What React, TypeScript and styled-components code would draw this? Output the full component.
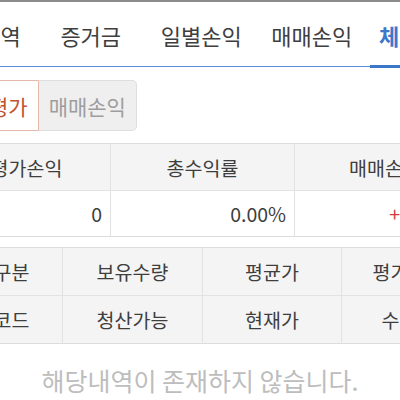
import React from 'react'
import styled, { createGlobalStyle } from 'styled-components'

const GlobalStyle = createGlobalStyle`
	html, body {
		margin: 0;
		padding: 0;
		background: #fff;
		overflow: hidden;
	}
	body {
		font-family: "Noto Sans CJK KR", "Noto Sans", sans-serif;
		color: #3e3e3e;
	}
`

const tabs = ['잔고내역', '증거금', '일별손익', '매매손익', '체결내역']
const activeTab = 4

const summaryHead = ['평가손익', '총수익률', '매매손익']

const listHead = [
	['구분', '보유수량', '평균가', '평가손익'],
	['코드', '청산가능', '현재가', '수익률'],
]

const App: React.FC = () => {
	return (
		<>
			<GlobalStyle />
			<Page>
				<TabBar>
					{tabs.map((t, i) => (
						<Tab key={t} active={i === activeTab}>
							{t}
						</Tab>
					))}
				</TabBar>

				<ToggleGroup>
					<Toggle active>평가</Toggle>
					<Toggle>매매손익</Toggle>
				</ToggleGroup>

				<SummaryTable>
					<tbody>
						<tr>
							{summaryHead.map((h) => (
								<HeadCell key={h}>{h}</HeadCell>
							))}
						</tr>
						<tr>
							<ValueCell>0</ValueCell>
							<ValueCell>0.00%</ValueCell>
							<ValueCell plus>+0.00%</ValueCell>
						</tr>
					</tbody>
				</SummaryTable>

				<ListTable>
					<tbody>
						{listHead.map((row, r) => (
							<tr key={r}>
								{row.map((h) => (
									<ListHeadCell key={h}>{h}</ListHeadCell>
								))}
							</tr>
						))}
					</tbody>
				</ListTable>

				<Empty>해당내역이 존재하지 않습니다.</Empty>
			</Page>
		</>
	)
}

const Page = styled.div`
	width: 550px;
	margin-left: -75px;
`

const TabBar = styled.div`
	display: flex;
	height: 64px;
	border-top: 2px solid #8c8c8c;
	border-bottom: 1px solid #5a8ed4;
`

const Tab = styled.div<{ active?: boolean }>`
	position: relative;
	flex: 0 0 110.5px;
	display: flex;
	align-items: center;
	justify-content: ${(props) => (props.active ? 'flex-start' : 'center')};
	padding: 2px 0 0 ${(props) => (props.active ? '12px' : '0')};
	box-sizing: border-box;
	font-size: 22px;
	white-space: nowrap;
	color: ${(props) => (props.active ? '#3a78cc' : '#3e3e3e')};
	font-weight: ${(props) => (props.active ? 700 : 400)};

	&::after {
		content: '';
		display: ${(props) => (props.active ? 'block' : 'none')};
		position: absolute;
		left: 3px;
		right: 3px;
		bottom: -2px;
		height: 3px;
		background: #3a78cc;
	}
`

const ToggleGroup = styled.div`
	display: flex;
	margin: 13px 0 0 53px;
`

const Toggle = styled.div<{ active?: boolean }>`
	height: 51px;
	padding: 0 10px;
	box-sizing: border-box;
	display: flex;
	align-items: center;
	justify-content: center;
	font-size: 21px;
	white-space: nowrap;
	background: ${(props) => (props.active ? '#fff' : '#efefef')};
	color: ${(props) => (props.active ? '#c4522e' : '#9d9d9d')};
	border: 1px solid ${(props) => (props.active ? '#e4b9aa' : '#dedede')};
	border-radius: ${(props) => (props.active ? '5px 0 0 5px' : '0 5px 5px 0')};
	${(props) => (props.active ? '' : 'border-left: none;')}
`

const SummaryTable = styled.table`
	width: 532px;
	margin: 12px 0 0 18px;
	border-collapse: collapse;
	table-layout: fixed;
	border-top: 1px solid #dcdcdc;
	border-bottom: 1px solid #dcdcdc;

	td:nth-child(1) {
		width: 167px;
	}
	td:nth-child(2) {
		width: 183px;
	}
	td + td {
		border-left: 1px solid #e2e2e2;
	}
`

const HeadCell = styled.td`
	height: 46px;
	padding: 0;
	background: #f4f4f4;
	border-bottom: 1px solid #e2e2e2;
	text-align: center;
	font-size: 19.5px;
	white-space: nowrap;
`

const ValueCell = styled.td<{ plus?: boolean }>`
	height: 45px;
	padding: 0 ${(props) => (props.plus ? '19px' : '8px')} 0 0;
	text-align: right;
	font-size: 19.5px;
	color: ${(props) => (props.plus ? '#d23a3a' : '#3e3e3e')};
	white-space: nowrap;
`

const ListTable = styled.table`
	width: 514px;
	margin: 10px 0 0 36px;
	border-collapse: collapse;
	table-layout: fixed;
	border-top: 1px solid #dcdcdc;
	border-bottom: 1px solid #dcdcdc;

	td:nth-child(1) {
		width: 101px;
	}
	td:nth-child(2) {
		width: 139px;
	}
	td:nth-child(3) {
		width: 138px;
	}
	td + td {
		border-left: 1px solid #e2e2e2;
	}
	tr + tr td {
		border-top: 1px solid #e2e2e2;
	}
`

const ListHeadCell = styled.td`
	height: 47px;
	padding: 0;
	background: #f4f4f4;
	text-align: center;
	font-size: 19.5px;
	white-space: nowrap;
`

const Empty = styled.div`
	margin-top: 22px;
	padding-left: 75px;
	width: 400px;
	text-align: center;
	font-size: 25px;
	line-height: 28px;
	color: #bdbdbd;
`

export default App
